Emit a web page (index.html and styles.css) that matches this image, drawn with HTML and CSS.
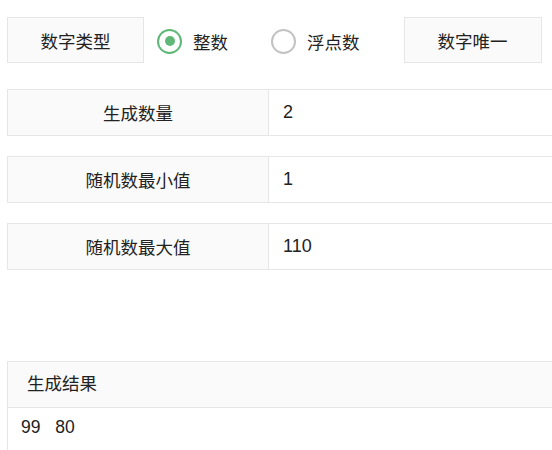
FILE: index.html
```html
<!DOCTYPE html>
<html lang="zh-CN">
<head>
    <meta charset="UTF-8">
    <meta name="viewport" content="width=device-width, initial-scale=1.0">
    <title>随机数生成</title>
    <link rel="stylesheet" href="styles.css">
</head>
<body>

<div class="page">
    <div class="type-bar">
        <div class="btn-label">数字类型</div>
        <label class="radio radio-int">
            <span class="radio-icon checked"></span>
            <span class="radio-text">整数</span>
        </label>
        <label class="radio radio-float">
            <span class="radio-icon"></span>
            <span class="radio-text">浮点数</span>
        </label>
        <div class="btn-label btn-unique">数字唯一</div>
    </div>

    <div class="form-row">
        <div class="form-label">生成数量</div>
        <div class="form-value">2</div>
    </div>

    <div class="form-row">
        <div class="form-label">随机数最小值</div>
        <div class="form-value">1</div>
    </div>

    <div class="form-row">
        <div class="form-label">随机数最大值</div>
        <div class="form-value">110</div>
    </div>

    <div class="result-card">
        <div class="result-header">生成结果</div>
        <div class="result-body">
            <span class="num">99</span>
            <span class="num">80</span>
        </div>
    </div>
</div>

</body>
</html>
```

FILE: styles.css
```css
html, body {
    margin: 0;
    padding: 0;
    overflow: hidden;
}

body {
    font-family: "Liberation Sans", "Noto Sans CJK SC", sans-serif;
    background-color: #fff;
    color: #222;
    font-size: 17.5px;
}

/* a página continua à direita: as linhas terminam no limite da janela */
.page {
    box-sizing: border-box;
    width: 552px;
    height: 450px;
    overflow: hidden;
    padding: 17px 0 0 7px;
}

.type-bar {
    display: flex;
    align-items: center;
    height: 46px;
}

.btn-label {
    box-sizing: border-box;
    width: 137px;
    height: 46px;
    display: flex;
    align-items: center;
    justify-content: center;
    background-color: #fafafa;
    border: 1px solid #e6e6e6;
}

.btn-unique {
    width: 138px;
    margin-left: 44px;
}

.radio {
    display: flex;
    align-items: center;
    gap: 11px;
    margin-top: 2px;
}

.radio-int {
    margin-left: 13px;
}

.radio-float {
    margin-left: 43px;
}

.radio-icon {
    box-sizing: border-box;
    width: 25px;
    height: 25px;
    border-radius: 50%;
    border: 2px solid #c2c2c2;
    display: flex;
    align-items: center;
    justify-content: center;
}

.radio-icon.checked {
    border-color: #5fb878;
}

.radio-icon.checked::after {
    content: "";
    width: 10px;
    height: 10px;
    border-radius: 50%;
    background-color: #5fb878;
}

.form-row {
    box-sizing: border-box;
    display: flex;
    height: 47px;
    margin-top: 20px;
    border: 1px solid #e6e6e6;
    border-right: none;
}

.type-bar + .form-row {
    margin-top: 26px;
}

.form-label {
    width: 260px;
    display: flex;
    align-items: center;
    justify-content: center;
    background-color: #fafafa;
    border-right: 1px solid #e6e6e6;
}

.form-value {
    flex: 1;
    display: flex;
    align-items: center;
    padding-left: 14px;
    font-size: 18px;
}

.result-card {
    margin-top: 91px;
    border: 1px solid #e6e6e6;
    border-right: none;
    border-bottom: none;
}

.result-header {
    height: 45px;
    line-height: 45px;
    padding-left: 19px;
    background-color: #fafafa;
    border-bottom: 1px solid #e6e6e6;
}

.result-body {
    padding: 9px 13px 0;
    line-height: 20px;
    font-size: 17.5px;
    height: 33px;
}

.num {
    margin-right: 10px;
}
```
